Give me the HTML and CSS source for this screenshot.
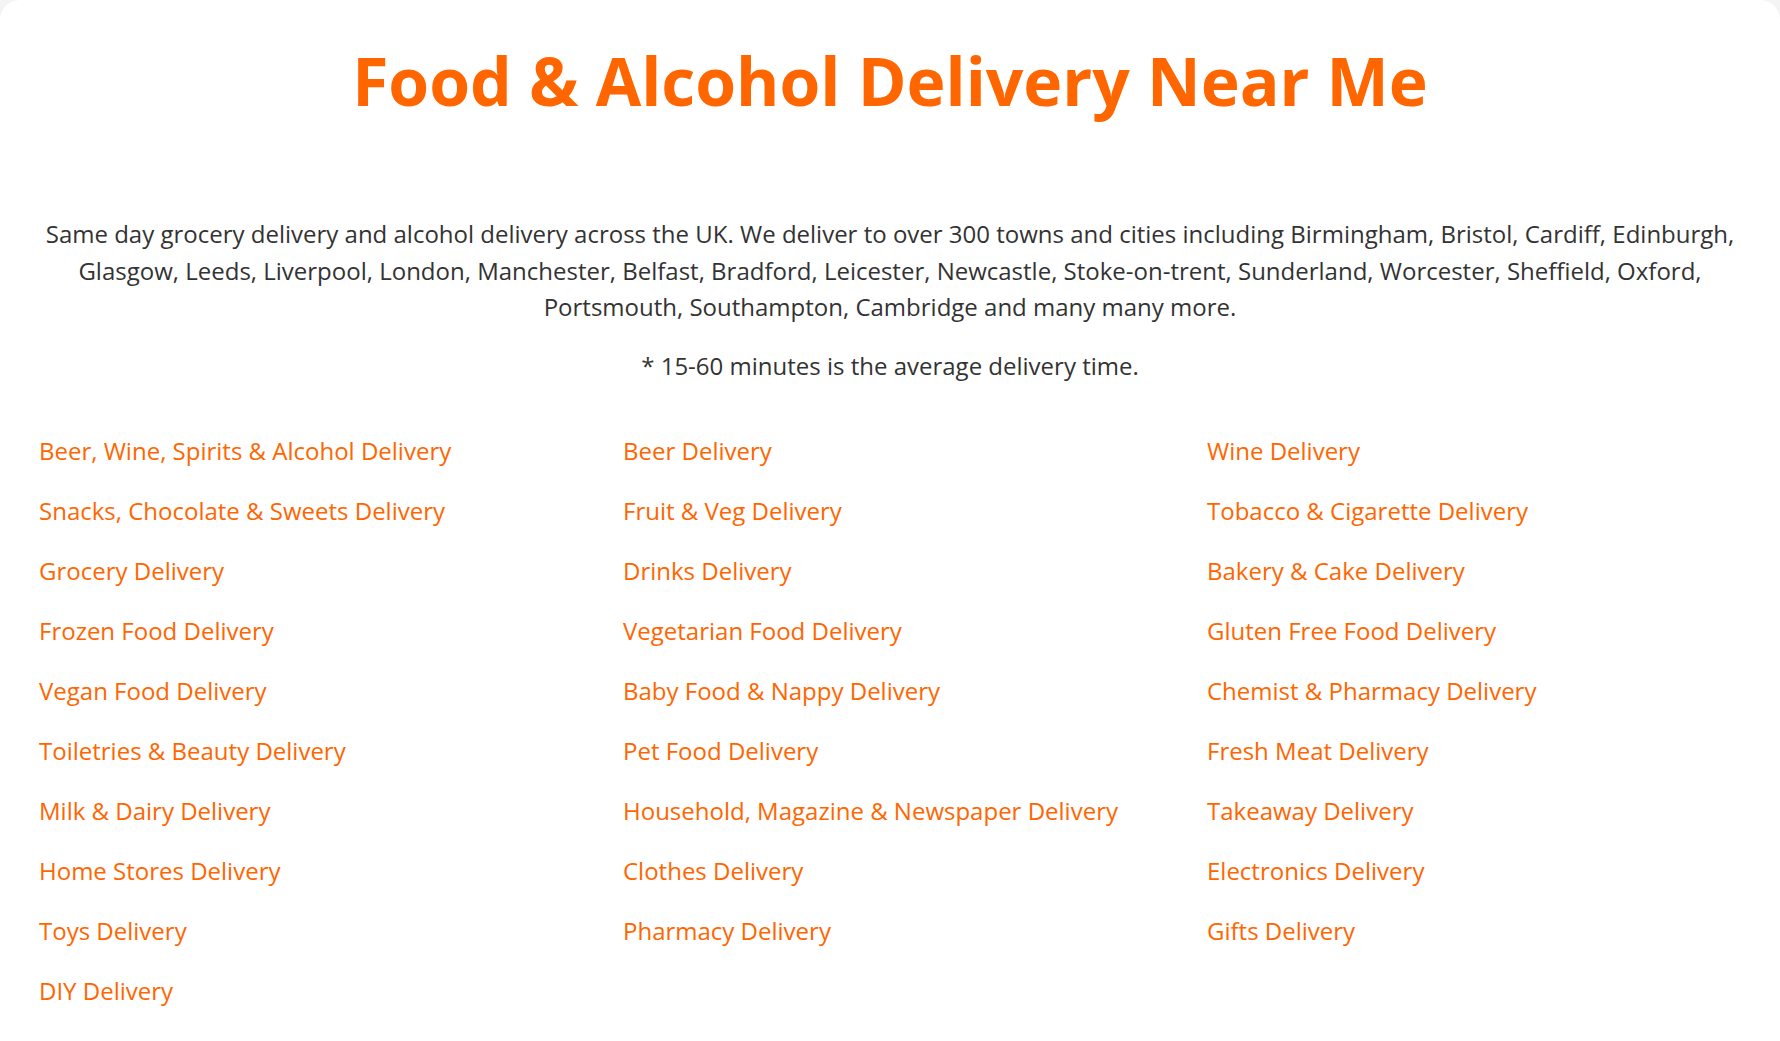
FILE: index.html
```html
<!DOCTYPE html>
<html lang="en">
<head>
  <meta charset="utf-8">
  <meta name="viewport" content="width=device-width,initial-scale=1">
  <title>Food &amp; Alcohol Delivery Near Me</title>
  <link rel="stylesheet" href="styles.css">
</head>
<body>
  <main class="card">
    <h1 class="title">Food &amp; Alcohol Delivery Near Me</h1>

    <section class="intro">
      <p>Same day grocery delivery and alcohol delivery across the UK. We deliver to over 300 towns and cities including Birmingham, Bristol, Cardiff, Edinburgh, Glasgow, Leeds, Liverpool, London, Manchester, Belfast, Bradford, Leicester, Newcastle, Stoke-on-trent, Sunderland, Worcester, Sheffield, Oxford, Portsmouth, Southampton, Cambridge and many many more.</p>
      <p>* 15-60 minutes is the average delivery time.</p>
    </section>

    <ul class="links">
      <li><a href="#">Beer, Wine, Spirits &amp; Alcohol Delivery</a></li>
      <li><a href="#">Beer Delivery</a></li>
      <li><a href="#">Wine Delivery</a></li>
      <li><a href="#">Snacks, Chocolate &amp; Sweets Delivery</a></li>
      <li><a href="#">Fruit &amp; Veg Delivery</a></li>
      <li><a href="#">Tobacco &amp; Cigarette Delivery</a></li>
      <li><a href="#">Grocery Delivery</a></li>
      <li><a href="#">Drinks Delivery</a></li>
      <li><a href="#">Bakery &amp; Cake Delivery</a></li>
      <li><a href="#">Frozen Food Delivery</a></li>
      <li><a href="#">Vegetarian Food Delivery</a></li>
      <li><a href="#">Gluten Free Food Delivery</a></li>
      <li><a href="#">Vegan Food Delivery</a></li>
      <li><a href="#">Baby Food &amp; Nappy Delivery</a></li>
      <li><a href="#">Chemist &amp; Pharmacy Delivery</a></li>
      <li><a href="#">Toiletries &amp; Beauty Delivery</a></li>
      <li><a href="#">Pet Food Delivery</a></li>
      <li><a href="#">Fresh Meat Delivery</a></li>
      <li><a href="#">Milk &amp; Dairy Delivery</a></li>
      <li><a href="#">Household, Magazine &amp; Newspaper Delivery</a></li>
      <li><a href="#">Takeaway Delivery</a></li>
      <li><a href="#">Home Stores Delivery</a></li>
      <li><a href="#">Clothes Delivery</a></li>
      <li><a href="#">Electronics Delivery</a></li>
      <li><a href="#">Toys Delivery</a></li>
      <li><a href="#">Pharmacy Delivery</a></li>
      <li><a href="#">Gifts Delivery</a></li>
      <li><a href="#">DIY Delivery</a></li>
    </ul>
  </main>
</body>
</html>
```

FILE: styles.css
```css
html {
  font-family: "Open Sans", sans-serif;
}

body {
  margin: 0;
  background-color: #f4f4f4;
}

*, :after, :before {
  box-sizing: border-box;
}

.card {
  min-height: 1041px;
  padding: 41px 14px 40px;
  background-color: #fff;
  border-radius: 20px 20px 0 0;
}

.title {
  margin: 0;
  color: #ff6600;
  font-size: 66px;
  font-weight: 700;
  line-height: 1.2;
  text-align: center;
}

.intro {
  margin-top: 96px;
  padding: 0 24px;
  color: #333;
  font-size: 24px;
  line-height: 36.5px;
  text-align: center;
}

.intro p {
  margin: 0 0 22px;
}

.links {
  display: grid;
  grid-template-columns: repeat(3, 1fr);
  row-gap: 24px;
  margin: 49px 0 0;
  padding: 0;
  list-style: none;
}

.links li {
  padding-left: 25px;
  font-size: 24px;
  line-height: 36px;
}

.links a {
  color: #ff6600;
  text-decoration: none;
}
```
